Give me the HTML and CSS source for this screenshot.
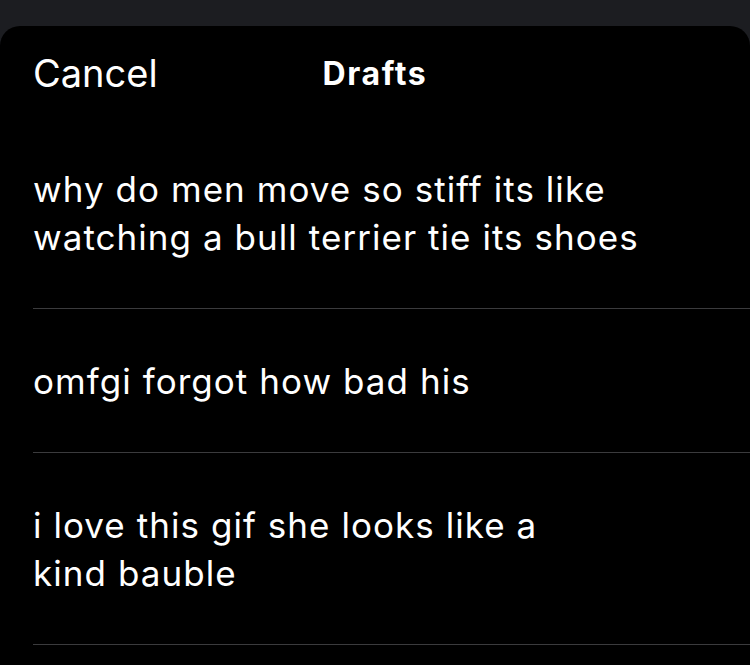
FILE: index.html
```html
<!DOCTYPE html>
<html>
<head>
<meta charset="utf-8">
<link rel="stylesheet" href="styles.css">
</head>
<body>
<div class="sheet">
  <header class="header">
    <span class="cancel">Cancel</span>
    <span class="title">Drafts</span>
  </header>
  <ul class="drafts">
    <li class="draft">why do men move so stiff its like<br>watching a bull terrier tie its shoes</li>
    <li class="draft">omfgi forgot how bad his</li>
    <li class="draft">i love this gif she looks like a<br>kind bauble</li>
  </ul>
</div>
</body>
</html>
```
FILE: styles.css
```css
html, body {
  margin: 0;
  padding: 0;
  background: #1c1d21;
  height: 100%;
  overflow: hidden;
}
body {
  padding-top: 26px;
  box-sizing: border-box;
  font-family: Inter, "Noto Sans", sans-serif;
  color: #ffffff;
}
.sheet {
  background: #000000;
  border-radius: 20px 20px 0 0;
  height: 100%;
}
.header {
  position: relative;
  height: 91px;
  display: flex;
  align-items: center;
  padding-left: 33px;
}
.cancel {
  font-size: 38px;
  font-weight: 400;
  padding-top: 2px;
}
.title {
  position: absolute;
  left: 0;
  right: 0;
  top: 28px;
  text-align: center;
  font-size: 32px;
  font-weight: 700;
  letter-spacing: 1.6px;
  line-height: 40px;
  pointer-events: none;
}
.drafts {
  list-style: none;
  margin: 0;
  padding: 0 0 0 33px;
}
.draft {
  padding: 48px 0 47px;
  font-size: 35px;
  letter-spacing: 1.05px;
  line-height: 48px;
  border-bottom: 1px solid #3b3b3d;
}
```
